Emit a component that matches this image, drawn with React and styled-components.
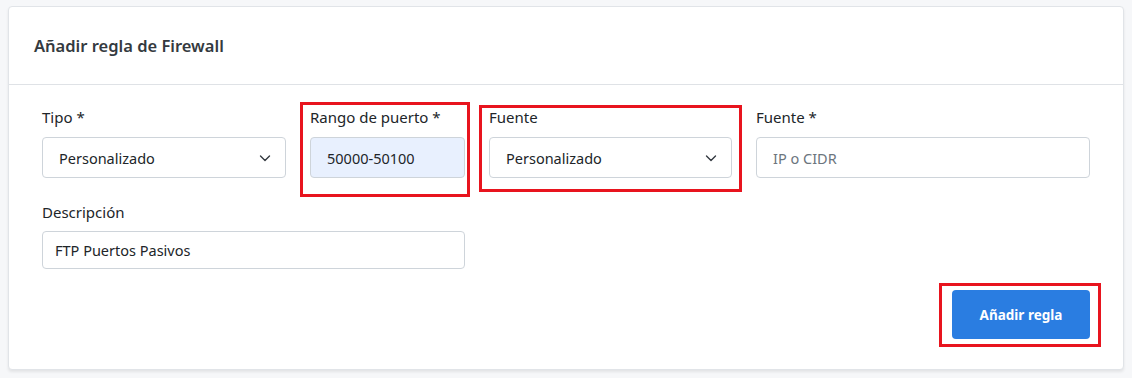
import React from 'react';
import styled, { createGlobalStyle } from 'styled-components';

const GlobalStyle = createGlobalStyle`
  body {
    margin: 0;
    background: #f6f7f9;
    font-family: "Noto Sans", "Open Sans", sans-serif;
    color: #212529;
  }
`;

const Page = styled.div`
  padding: 6px 8px 8px 8px;
`;

const Card = styled.section`
  background: #fff;
  border: 1px solid #e1e4e8;
  border-radius: 4px;
  box-shadow: 0 2px 3px rgba(0, 0, 0, 0.08);
`;

const CardHeader = styled.header`
  height: 78px;
  display: flex;
  align-items: center;
  padding: 0 25px;
  border-bottom: 1px solid #dfe2e6;
  box-sizing: border-box;
  h2 {
    margin: 0;
    font-size: 16.5px;
    font-weight: 600;
    color: #343a40;
  }
`;

const CardBody = styled.div`
  padding: 21px 33px 30px 33px;
`;

const FormGrid = styled.div`
  display: grid;
  grid-template-columns: 244px 155px 243px 1fr;
  column-gap: 24px;
  row-gap: 23px;
`;

const Field = styled.div`
  position: relative;
  display: flex;
  flex-direction: column;
  grid-column: ${p => (p.$span ? `span ${p.$span}` : 'auto')};
  ${p => p.$mark && `
    &::after {
      content: '';
      position: absolute;
      top: ${p.$mark[0]}px;
      right: ${p.$mark[1]}px;
      bottom: ${p.$mark[2]}px;
      left: ${p.$mark[3]}px;
      border: 3px solid #e8141e;
      pointer-events: none;
    }
  `}
`;

const Label = styled.label`
  font-size: 15px;
  line-height: 22px;
  margin-bottom: ${p => (p.$tight ? 8 : 9)}px;
`;

const Input = styled.input`
  box-sizing: border-box;
  height: ${p => (p.$small ? 38 : 41)}px;
  width: 100%;
  border: 1px solid #ced4da;
  border-radius: 4px;
  padding: 0 ${p => (p.$small ? 12 : 16)}px;
  font: inherit;
  font-size: 14.5px;
  color: #212529;
  background: ${p => (p.$filled ? '#e8f0fe' : '#fff')};
  outline: none;
  &::placeholder {
    color: #6c757d;
  }
`;

const SelectBox = styled.div`
  box-sizing: border-box;
  height: 41px;
  border: 1px solid #ced4da;
  border-radius: 4px;
  padding: 0 14px 0 16px;
  display: flex;
  align-items: center;
  justify-content: space-between;
  font-size: 14.5px;
  background: #fff;
`;

const Actions = styled.div`
  display: flex;
  justify-content: flex-end;
  margin-top: 21px;
`;

const ButtonWrap = styled.div`
  position: relative;
  &::after {
    content: '';
    position: absolute;
    top: -7px;
    right: -11px;
    bottom: -8px;
    left: -13px;
    border: 3px solid #e8141e;
    pointer-events: none;
  }
`;

const PrimaryButton = styled.button`
  width: 138px;
  height: 49px;
  border: none;
  border-radius: 4px;
  background: #2a7de1;
  color: #fff;
  font: inherit;
  font-size: 13.5px;
  font-weight: 700;
  cursor: pointer;
`;

const Chevron = () => (
  <svg width="12" height="12" viewBox="0 0 12 12" fill="none">
    <path d="M1.5 4l4.5 4.5L10.5 4" stroke="#343a40" strokeWidth="1.4" strokeLinecap="round" strokeLinejoin="round" />
  </svg>
);

const Select = ({ value }) => (
  <SelectBox>
    <span>{value}</span>
    <Chevron />
  </SelectBox>
);

export default function App() {
  return (
    <Page>
      <GlobalStyle />
      <Card>
        <CardHeader>
          <h2>Añadir regla de Firewall</h2>
        </CardHeader>
        <CardBody>
          <FormGrid>
            <Field>
              <Label>Tipo *</Label>
              <Select value="Personalizado" />
            </Field>
            <Field $mark={[-4, -5, -19, -10]}>
              <Label>Rango de puerto *</Label>
              <Input $filled defaultValue="50000-50100" />
            </Field>
            <Field $mark={[-1, -10, -14, -10]}>
              <Label>Fuente</Label>
              <Select value="Personalizado" />
            </Field>
            <Field>
              <Label>Fuente *</Label>
              <Input placeholder="IP o CIDR" />
            </Field>
            <Field $span={2}>
              <Label $tight>Descripción</Label>
              <Input $small defaultValue="FTP Puertos Pasivos" />
            </Field>
          </FormGrid>
          <Actions>
            <ButtonWrap>
              <PrimaryButton>Añadir regla</PrimaryButton>
            </ButtonWrap>
          </Actions>
        </CardBody>
      </Card>
    </Page>
  );
}
